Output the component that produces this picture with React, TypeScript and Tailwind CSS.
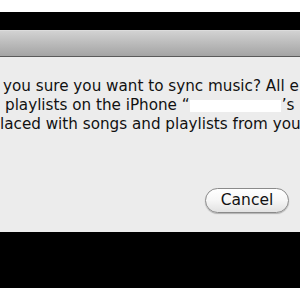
export default function App() {
  return (
    <div className="w-[300px] h-[300px] bg-white overflow-hidden flex flex-col" style={{ fontFamily: '"DejaVu Sans", sans-serif' }}>
      <div className="h-[12px] shrink-0 bg-white" />
      <div className="h-[18px] shrink-0 bg-black" />
      <div className="h-[27px] shrink-0 bg-gradient-to-b from-[#d2d2d2] to-[#a4a4a4] border-t border-[#dcdcdc] border-b border-b-[#5a5a5a]" />
      <div className="h-[175px] shrink-0 bg-[#ececec] flex flex-col pt-[20px] text-[15.2px] leading-[19px] text-[#111]">
        <div className="whitespace-nowrap pl-[3px]">you sure you want to sync music? All e</div>
        <div className="whitespace-nowrap pl-[5px] flex items-center">
          <span>playlists on the iPhone “</span>
          <span className="inline-block shrink-0 w-[91px] h-[12px] bg-white" />
          <span className="ml-[1px]">’s</span>
        </div>
        <div className="whitespace-nowrap pl-[0px]">laced with songs and playlists from you</div>
        <div className="flex justify-end pr-[11px] mt-[54px]">
          <button className="w-[84px] h-[25px] rounded-full border border-[#8a8a8a] bg-gradient-to-b from-[#ffffff] via-[#f6f6f6] to-[#e2e2e2] text-[15.5px] leading-[19px] text-[#111] flex items-center justify-center shadow-[0_1px_1px_rgba(0,0,0,0.25)]">
            Cancel
          </button>
        </div>
      </div>
      <div className="h-[56px] shrink-0 bg-black" />
      <div className="flex-1 bg-white" />
    </div>
  );
}
